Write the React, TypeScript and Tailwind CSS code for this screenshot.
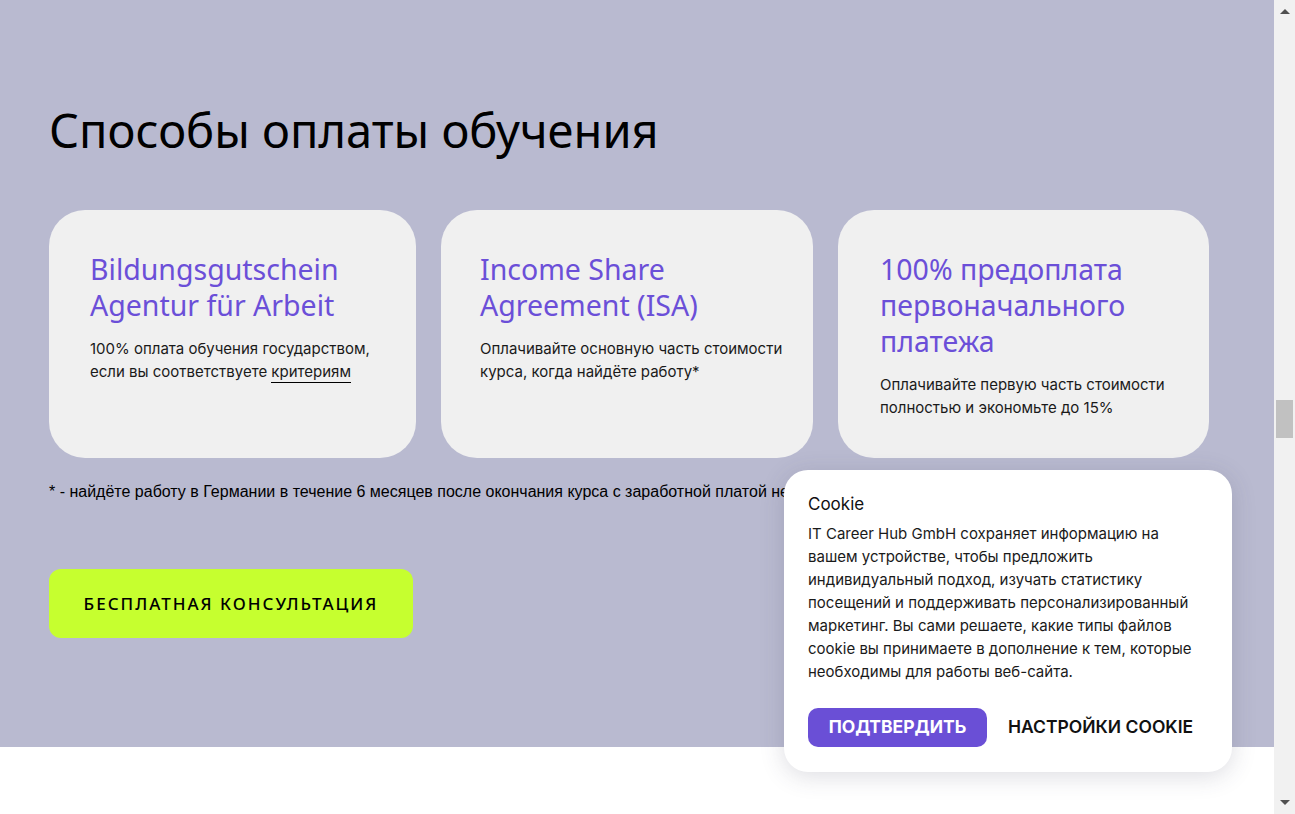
import React from 'react';

const cards = [
  {
    title: ['Bildungsgutschein', 'Agentur für Arbeit'],
    pad: 'pl-[41px]',
    body: (
      <>
        100% оплата обучения государством,
        <br />
        если вы соответствуете{' '}
        <span className="border-b border-black pb-[1px]">критериям</span>
      </>
    ),
  },
  {
    title: ['Income Share', 'Agreement (ISA)'],
    pad: 'pl-[39px]',
    body: (
      <>
        Оплачивайте основную часть стоимости
        <br />
        курса, когда найдёте работу*
      </>
    ),
  },
  {
    title: ['100% предоплата', 'первоначального', 'платежа'],
    pad: 'pl-[42px]',
    body: (
      <>
        Оплачивайте первую часть стоимости
        <br />
        полностью и экономьте до 15%
      </>
    ),
  },
];

const CookieBanner: React.FC = () => (
  <div className="absolute left-[784px] top-[470px] w-[448px] rounded-[24px] bg-white px-6 pt-[22px] pb-[25px] shadow-[0_4px_24px_rgba(60,60,90,0.18)] font-['Inter',sans-serif]">
    <div className="text-[17px] leading-[24px] text-[#111]">Cookie</div>
    <p className="mt-[6px] text-[15px] leading-[23px] text-[#1a1a1a]">
      IT Career Hub GmbH сохраняет информацию на вашем устройстве, чтобы предложить индивидуальный
      подход, изучать статистику посещений и поддерживать персонализированный маркетинг. Вы сами
      решаете, какие типы файлов cookie вы принимаете в дополнение к тем, которые необходимы для
      работы веб-сайта.
    </p>
    <div className="mt-[25px] flex items-center gap-[21px]">
      <button className="h-[39px] w-[179px] rounded-[10px] bg-[#6a4fd6] text-[17.5px] font-bold text-white">
        ПОДТВЕРДИТЬ
      </button>
      <button className="whitespace-nowrap text-[17.5px] font-semibold text-[#111]">НАСТРОЙКИ COOKIE</button>
    </div>
  </div>
);

const App: React.FC = () => {
  return (
    <div className="relative flex h-[814px] w-[1295px] overflow-hidden bg-white">
      <div className="flex w-[1274px] flex-col">
        <section className="h-[747px] bg-[#b9bad0] px-[49px] pt-[102px]">
          <h1 className="font-['Noto_Sans',sans-serif] text-[47px] leading-[56px] text-black">
            Способы оплаты обучения
          </h1>
          <div className="mt-[52px] grid w-[1160px] grid-cols-[367px_372px_371px] gap-[25px]">
            {cards.map((c, i) => (
              <div key={i} className={`h-[248px] rounded-[36px] bg-[#f0f0f0] pt-[41px] ${c.pad}`}>
                <div className="font-['Noto_Sans',sans-serif] text-[28.5px] leading-[36px] text-[#6b4fd8]">
                  {c.title.map((t) => (
                    <div key={t}>{t}</div>
                  ))}
                </div>
                <p className="mt-[14px] whitespace-nowrap font-['Inter',sans-serif] text-[15px] leading-[23px] text-[#1a1a1a]">
                  {c.body}
                </p>
              </div>
            ))}
          </div>
          <p className="mt-[24px] whitespace-nowrap font-['Liberation_Sans',sans-serif] text-[16px] leading-[20px] text-black">
            * - найдёте работу в Германии в течение 6 месяцев после окончания курса с заработной платой не
          </p>
          <button className="mt-[67px] flex h-[69px] w-[364px] items-center justify-center rounded-[12px] bg-[#c6ff2f] font-['Noto_Sans',sans-serif] text-[17px] font-medium tracking-[2px] text-black">
            БЕСПЛАТНАЯ КОНСУЛЬТАЦИЯ
          </button>
        </section>
        <div className="flex-1 bg-white" />
      </div>
      <div className="flex w-[21px] flex-col items-center bg-[#f1f1f1]">
        <div className="mt-[9px] h-0 w-0 border-x-[5px] border-b-[5px] border-x-transparent border-b-[#505050]" />
        <div className="mt-[386px] h-[38px] w-[17px] bg-[#c1c1c1]" />
        <div className="mt-auto mb-[9px] h-0 w-0 border-x-[5px] border-t-[5px] border-x-transparent border-t-[#505050]" />
      </div>
      <CookieBanner />
    </div>
  );
};

export default App;
